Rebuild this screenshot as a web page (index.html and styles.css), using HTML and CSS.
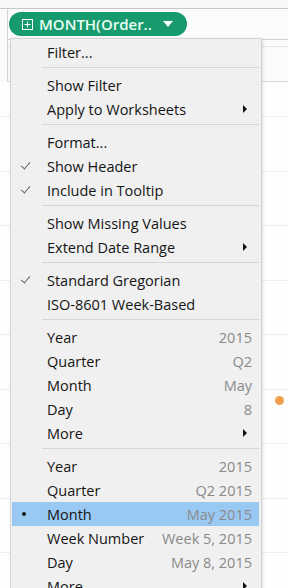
FILE: index.html
```html
<!DOCTYPE html>
<html lang="en">
<head>
  <meta charset="UTF-8" />
  <meta name="viewport" content="width=device-width, initial-scale=1.0"/>
  <title>Month pill menu</title>
  <link rel="stylesheet" href="styles.css">
</head>
<body>

  <div class="toolbar"></div>

  <div class="panel">
    <div class="shelf">
      <div class="pill">
        <svg class="pill-plus" width="11" height="11" viewBox="0 0 11 11">
          <rect x="0.5" y="0.5" width="10" height="10" fill="none" stroke="#fff" stroke-width="1"/>
          <path d="M5.5 2.5v6M2.5 5.5h6" stroke="#fff" stroke-width="1"/>
        </svg>
        <span class="pill-text">MONTH(Order..</span>
        <span class="pill-caret"></span>
      </div>
    </div>
    <div class="header-row"></div>
    <div class="header-row tall"></div>
  </div>

  <div class="view">
    <span class="mark"></span>
  </div>

  <div class="menu">
    <div class="item"><span class="label">Filter...</span></div>
    <div class="sep"></div>
    <div class="item"><span class="label">Show Filter</span></div>
    <div class="item"><span class="label">Apply to Worksheets</span><span class="arrow"></span></div>
    <div class="sep"></div>
    <div class="item"><span class="label">Format...</span></div>
    <div class="item checked"><span class="label">Show Header</span></div>
    <div class="item checked"><span class="label">Include in Tooltip</span></div>
    <div class="sep"></div>
    <div class="item"><span class="label">Show Missing Values</span></div>
    <div class="item"><span class="label">Extend Date Range</span><span class="arrow"></span></div>
    <div class="sep"></div>
    <div class="item checked"><span class="label">Standard Gregorian</span></div>
    <div class="item"><span class="label">ISO-8601 Week-Based</span></div>
    <div class="sep"></div>
    <div class="item"><span class="label">Year</span><span class="value">2015</span></div>
    <div class="item"><span class="label">Quarter</span><span class="value">Q2</span></div>
    <div class="item"><span class="label">Month</span><span class="value">May</span></div>
    <div class="item"><span class="label">Day</span><span class="value">8</span></div>
    <div class="item"><span class="label">More</span><span class="arrow"></span></div>
    <div class="sep"></div>
    <div class="item"><span class="label">Year</span><span class="value">2015</span></div>
    <div class="item"><span class="label">Quarter</span><span class="value">Q2 2015</span></div>
    <div class="item active"><span class="label">Month</span><span class="value">May 2015</span></div>
    <div class="item"><span class="label">Week Number</span><span class="value">Week 5, 2015</span></div>
    <div class="item"><span class="label">Day</span><span class="value">May 8, 2015</span></div>
    <div class="item"><span class="label">More</span><span class="arrow"></span></div>
  </div>

</body>
</html>
```

FILE: styles.css
```css
body {
  margin: 0;
  padding: 0;
  background: #fbfbfb;
  font-family: 'Open Sans', 'Noto Sans', sans-serif;
  color: #151515;
  overflow: hidden;
  height: 588px;
}

.toolbar {
  height: 8px;
  border-bottom: 1px solid #c8c8c8;
  background: #f7f7f7;
}

.panel {
  margin-left: 7px;
  border-left: 1px solid #d4d4d4;
}

.shelf {
  height: 31px;
  border-bottom: 1px solid #d0d0d0;
  padding-top: 3px;
  box-sizing: border-box;
}

.header-row {
  height: 6px;
  border-bottom: 1px solid #e2e2e2;
}

.header-row.tall {
  height: 34px;
  border-bottom: 1px solid #d8d8d8;
}

.pill {
  display: flex;
  align-items: center;
  width: 178px;
  height: 24px;
  margin-left: 1px;
  box-sizing: border-box;
  padding-left: 13px;
  background: #179a6d;
  border-radius: 12px;
  color: #eafff6;
}

.pill-plus {
  flex: none;
}

.pill-text {
  margin-left: 6px;
  font-size: 15px;
  font-weight: 600;
  white-space: nowrap;
}

.pill-caret {
  margin-left: 11px;
  width: 0;
  height: 0;
  border-left: 5px solid transparent;
  border-right: 5px solid transparent;
  border-top: 6px solid #fff;
}

.view {
  position: relative;
  height: 600px;
  background-color: #fefefe;
  background-image: repeating-linear-gradient(
    to bottom,
    transparent 0,
    transparent 53.5px,
    #eeeeee 53.5px,
    #eeeeee 54.5px
  );
  background-position: 0 35px;
}

.mark {
  position: absolute;
  left: 275px;
  top: 314px;
  width: 9px;
  height: 9px;
  border-radius: 50%;
  background: #f2a04c;
}

.menu {
  position: absolute;
  left: 10px;
  top: 38px;
  width: 252px;
  box-sizing: border-box;
  padding-top: 1px;
  background: #f0f0f0;
  border: 1px solid #d3d3d3;
  box-shadow: 1px 1px 3px rgba(0, 0, 0, 0.12);
  font-size: 14.5px;
}

.item {
  position: relative;
  display: flex;
  align-items: center;
  height: 24px;
  padding: 0 7px 0 35px;
  margin: 0 2px 0 1px;
  white-space: nowrap;
}

.item .label {
  flex: 1;
}

.item .value {
  color: #8a8a8a;
}

.item .arrow {
  width: 0;
  height: 0;
  margin-right: 5px;
  border-top: 4px solid transparent;
  border-bottom: 4px solid transparent;
  border-left: 4px solid #111;
}

.item.checked::before {
  content: "";
  position: absolute;
  left: 9px;
  top: 8px;
  width: 8px;
  height: 4px;
  border-left: 1px solid #666;
  border-bottom: 1px solid #666;
  transform: rotate(-50deg);
}

.item.active {
  background: #99c9f3;
}

.item.active::before {
  content: "";
  position: absolute;
  left: 10px;
  top: 10px;
  width: 4px;
  height: 4px;
  border-radius: 50%;
  background: #1a1a1a;
}

.sep {
  height: 1px;
  margin: 3px 2px 5px 31px;
  background: #d6d6d6;
}
```
